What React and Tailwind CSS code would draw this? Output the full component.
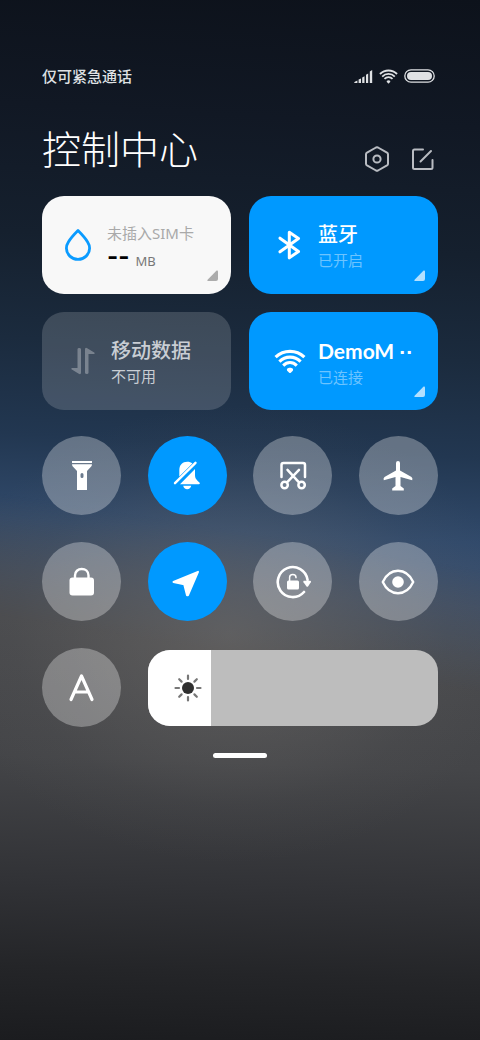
import React, { useState } from 'react';

const DropIcon = () => (
  <svg viewBox="0 0 28 34" className="w-7 h-[34px]" fill="none" stroke="#0a9bff" strokeWidth="2.8" strokeLinejoin="round" aria-hidden="true">
    <path d="M14 2.6C13 3.6 6.6 10.5 4.4 14C3 16.2 2.4 18 2.4 20.2C2.4 26.4 7.6 31.4 14 31.4S25.6 26.4 25.6 20.2C25.6 18 25 16.2 23.6 14C21.4 10.5 15 3.6 14 2.6Z" />
  </svg>
);

const BluetoothIcon = () => (
  <svg viewBox="0 0 24 30" className="w-6 h-[30px]" fill="none" stroke="currentColor" strokeWidth="3" strokeLinecap="round" strokeLinejoin="round" aria-hidden="true">
    <path d="M3 8.2L21.5 21.5L12.3 27.8V2.2L21.5 8.5L3 21.8" />
  </svg>
);

const DataIcon = () => (
  <svg viewBox="0 0 26 28" className="w-[26px] h-7" fill="currentColor" aria-hidden="true">
    <path d="M7.5 2.2Q7.5 1 9.2 1T11 2.2V25.5Q11 28 8.8 26.8L1.4 22.2Q1 21 2.2 21H7.5Z" />
    <path d="M18.5 25.8Q18.5 27 16.8 27T15 25.8V2.5Q15 0 17.2 1.2L24.6 5.8Q25 7 23.8 7H18.5Z" />
  </svg>
);

const WifiIcon = ({ className }) => (
  <svg viewBox="0 0 32 25" className={className} fill="none" stroke="currentColor" aria-hidden="true">
    <path d="M1.6 8.2C9.8 0.3 22.2 0.3 30.4 8.2" strokeWidth="3.2" />
    <path d="M5.4 12.6C11.4 6.6 20.6 6.6 26.6 12.6" strokeWidth="3.1" />
    <path d="M9.2 16.6C13.1 12.6 18.9 12.6 22.8 16.6" strokeWidth="3" />
    <path d="M16.8 23.8Q16 24.4 15.2 23.8L13.2 21.8C12.2 20 13.8 18.8 16 18.8S19.8 20 18.8 21.8Z" fill="currentColor" stroke="none" />
  </svg>
);

const SignalIcon = () => (
  <svg viewBox="0 0 19 13" className="w-[19px] h-[13px]" fill="currentColor" aria-hidden="true">
    <path d="M0 13Q0 11.5 3.4 10.5V13ZM4.6 9.6L7 8.5V13H4.6ZM8.2 7.5L10.5 6.3V13H8.2ZM12 4.8L14.2 3.5V13H12ZM15.8 1.5L18.2 0V13H15.8Z" />
  </svg>
);

const BatteryIcon = () => (
  <svg viewBox="0 0 31 14" className="w-[31px] h-[14px]" aria-hidden="true">
    <rect x="0.8" y="0.8" width="29.4" height="12.4" rx="6.2" fill="none" stroke="currentColor" strokeWidth="1.3" />
    <rect x="3" y="3" width="25" height="8" rx="4" fill="currentColor" />
  </svg>
);

const SettingsIcon = () => (
  <svg viewBox="0 0 26 28" className="w-[26px] h-7" fill="none" stroke="currentColor" strokeWidth="2" strokeLinejoin="round" aria-hidden="true">
    <path d="M12 2.5Q13 2 14 2.5L23 7.6Q24 8.2 24 9.2V18.8Q24 19.8 23 20.4L14 25.5Q13 26 12 25.5L3 20.4Q2 19.8 2 18.8V9.2Q2 8.2 3 7.6Z" />
    <circle cx="13" cy="14" r="3.6" />
  </svg>
);

const EditIcon = () => (
  <svg viewBox="0 0 24 24" className="size-6" fill="none" stroke="currentColor" strokeWidth="2" strokeLinecap="round" strokeLinejoin="round" aria-hidden="true">
    <path d="M12 2.5H3.5Q2 2.5 2 4V20.5Q2 22 3.5 22H20Q21.5 22 21.5 20.5V13" />
    <path d="M9.5 14.5L20 4" />
  </svg>
);

const FlashlightIcon = () => (
  <svg viewBox="0 0 32 32" className="size-8" fill="currentColor" aria-hidden="true">
    <path d="M6 1H26V3H6Z" />
    <path fillRule="evenodd" d="M6 4.2H26Q26 6 24.5 7.2L21 11V30H11V11L7.5 7.2Q6 6 6 4.2ZM16 13Q14.5 13 14.5 14.5V16.5Q14.5 18 16 18T17.5 16.5V14.5Q17.5 13 16 13Z" />
  </svg>
);

const MuteIcon = () => (
  <svg viewBox="0 0 32 32" className="size-8" fill="currentColor" aria-hidden="true">
    <path d="M8.3 16.5V10C8.3 5 11.5 1.8 16.3 1.8C18.3 1.8 20.1 2.4 21.4 3.4Z" />
    <path d="M24 9V15C24 18 25 19.5 28.5 22.5Q29.5 24.2 28 24.2H9Z" />
    <path d="M4 23.2L24.5 2.8" fill="none" stroke="currentColor" strokeWidth="2.4" strokeLinecap="round" />
    <path d="M12.2 25.8H20.2Q19.4 29.2 16.2 29.2T12.2 25.8Z" />
  </svg>
);

const ScreenshotIcon = () => (
  <svg viewBox="0 0 32 32" className="size-8" fill="none" stroke="currentColor" strokeWidth="2.5" strokeLinecap="round" aria-hidden="true">
    <path d="M4.5 17V5Q4.5 3 6.5 3H26Q28 3 28 5V17" />
    <path d="M10.5 9.8L21.5 21.8M22 9.8L10.5 21.8" />
    <circle cx="7.6" cy="25" r="3.2" />
    <circle cx="24.6" cy="25" r="3.2" />
  </svg>
);

const PlaneIcon = () => (
  <svg viewBox="0 0 32 32" className="size-8" fill="currentColor" aria-hidden="true">
    <path d="M14 3Q14 1 16 1T18 3V10.5L29.5 17Q31 18.2 30.2 20.2L18.5 17V26L21.8 28.5V30.5H10.2V28.5L13.5 26V17L1.8 20.2Q1 18.2 2.5 17L14 10.5Z" />
  </svg>
);

const LockIcon = () => (
  <svg viewBox="0 0 32 32" className="size-8" aria-hidden="true">
    <rect x="3.5" y="11.5" width="24.5" height="18" rx="3" fill="currentColor" />
    <path d="M9 13V9.5C9 5.5 12 3 15.7 3S22.5 5.5 22.5 9.5V13" fill="none" stroke="currentColor" strokeWidth="2.4" />
  </svg>
);

const LocationIcon = () => (
  <svg viewBox="0 0 32 32" className="size-8" fill="currentColor" stroke="currentColor" strokeWidth="2" strokeLinejoin="round" aria-hidden="true">
    <path d="M2.5 16L27 5.8L17 29.2H16L13.2 18.3Z" />
  </svg>
);

const RotateLockIcon = () => (
  <svg viewBox="0 0 36 36" className="size-9" aria-hidden="true">
    <path d="M29 28A15 15 0 1 1 32.6 16" fill="none" stroke="currentColor" strokeWidth="2.6" strokeLinecap="round" />
    <path d="M28.8 16.8H35.2Q36.4 17 35.8 18.2L33.2 22.2Q32.3 23.4 31.3 22.2L28.5 18.2Q28 17 28.8 16.8Z" fill="currentColor" />
    <rect x="12" y="16.5" width="12" height="9" rx="1.5" fill="currentColor" />
    <path d="M14.6 17V13.5Q14.6 10.6 17.8 10.6T21 13.5V14.2" fill="none" stroke="currentColor" strokeWidth="1.5" />
  </svg>
);

const EyeIcon = () => (
  <svg viewBox="0 0 34 28" className="w-[34px] h-7" aria-hidden="true">
    <path d="M1.8 14C5.5 6 11 2.8 17 2.8S28.5 6 32.2 14C28.5 22 23 25.2 17 25.2S5.5 22 1.8 14Z" fill="none" stroke="currentColor" strokeWidth="2.4" strokeLinejoin="round" />
    <circle cx="17" cy="14" r="5.8" fill="currentColor" />
  </svg>
);

// Monoline glyph used for the automatic brightness toggle
const AutoIcon = () => (
  <svg viewBox="0 0 28 30" className="w-7 h-[30px]" fill="none" stroke="currentColor" strokeWidth="3.2" strokeLinecap="round" strokeLinejoin="round" aria-hidden="true">
    <path d="M3 26.5L13.5 3L24 26.5M7 19H20" />
  </svg>
);

const SunIcon = () => (
  <svg viewBox="0 0 28 28" className="size-7" aria-hidden="true">
    <circle cx="14" cy="14" r="6" fill="#303030" />
    <path d="M14 1.5V5M14 23V26.5M1.5 14H5M23 14H26.5M5.2 5.2L7.6 7.6M20.4 20.4L22.8 22.8M5.2 22.8L7.6 20.4M20.4 7.6L22.8 5.2" stroke="#777777" strokeWidth="2.2" strokeLinecap="round" />
  </svg>
);

const Corner = ({ className }) => (
  <svg viewBox="0 0 11 11" className={`absolute right-[13px] bottom-[13px] size-[11px] ${className}`} fill="currentColor" aria-hidden="true">
    <path d="M9.6 0.5Q11 0 11 1.5V9Q11 11 9 11H1.2Q-0.4 11 0.6 9.8Z" />
  </svg>
);

const Card = ({ icon, iconClass, cardClass, corner, children }) => (
  <button type="button" className={`relative flex h-[98px] items-center rounded-[22px] text-left ${cardClass}`}>
    <span className={`flex shrink-0 justify-center ${iconClass}`}>{icon}</span>
    <span className="flex min-w-0 flex-col pt-1">{children}</span>
    {corner && <Corner className={corner} />}
  </button>
);

const toggles = [
  { id: 'flashlight', label: '手电筒', Icon: FlashlightIcon },
  { id: 'mute', label: '静音', Icon: MuteIcon },
  { id: 'screenshot', label: '截屏', Icon: ScreenshotIcon },
  { id: 'airplane', label: '飞行模式', Icon: PlaneIcon },
  { id: 'lock', label: '锁屏', Icon: LockIcon },
  { id: 'location', label: '位置信息', Icon: LocationIcon },
  { id: 'rotate', label: '方向锁定', Icon: RotateLockIcon },
  { id: 'eye', label: '护眼模式', Icon: EyeIcon },
  { id: 'auto', label: '自动亮度', Icon: AutoIcon },
];

const App = () => {
  const [active, setActive] = useState({ mute: true, location: true });
  const [brightness, setBrightness] = useState(22);

  const toggle = (id) => setActive((prev) => ({ ...prev, [id]: !prev[id] }));

  return (
    <div className="relative isolate min-h-screen overflow-hidden bg-[linear-gradient(183deg,#0d121b_0%,#111824_12%,#15202e_24%,#1b2b3e_34%,#223751_43%,#314a6b_51%,#3f526e_57%,#44546b_62%)] px-[42px] pt-[66px] font-['Noto_Sans','Noto_Sans_CJK_SC',sans-serif] text-white">
      {/* Grey lower half of the wallpaper, with a soft glow around the middle */}
      <div className="absolute inset-0 -z-10 bg-[linear-gradient(182deg,#4a4b4e_0%,#4a4b4e_60%,#444548_73%,#313236_85%,#242528_93%,#1b1c1f_100%)] [mask-image:linear-gradient(189deg,transparent_51%,black_62%)]" />
      <div className="absolute inset-0 -z-10 bg-[radial-gradient(ellipse_60%_22%_at_48%_61%,rgba(122,118,114,0.45)_0%,rgba(116,113,110,0.28)_40%,rgba(108,106,104,0.08)_75%,transparent_100%)]" />

      <header>
        <div className="flex h-5 items-center justify-between text-[#dfe1e4]">
          <span className="text-[15px] leading-5 font-medium">仅可紧急通话</span>
          <div className="mr-[3px] flex items-center gap-1.5">
            <SignalIcon />
            <WifiIcon className="w-[19px] h-[15px]" />
            <BatteryIcon />
          </div>
        </div>
        <div className="mt-[37px] flex h-[52px] items-center justify-between">
          <h1 className="text-[39px] leading-[52px] font-light">控制中心</h1>
          <div className="mt-5 mr-[3px] flex items-center gap-[21px] text-[#b9bcc2]">
            <button type="button" aria-label="设置"><SettingsIcon /></button>
            <button type="button" aria-label="编辑"><EditIcon /></button>
          </div>
        </div>
      </header>

      <main>
        <div className="mt-[21px] grid grid-cols-2 gap-[18px]">
          <Card icon={<DropIcon />} iconClass="ml-[22px] w-7 mr-[15px]" cardClass="bg-[#f8f8f8]" corner="text-[#acacac]">
            <span className="text-[15px] leading-5 text-[#a9a9a9]">未插入SIM卡</span>
            <span className="flex h-7 items-start gap-1.5 pt-1 text-black">
              <span className="font-['Inter',sans-serif] text-2xl leading-5 font-bold">--</span>
              <span className="pt-1 text-[13px] leading-5 text-[#777777]">MB</span>
            </span>
          </Card>
          <Card icon={<BluetoothIcon />} iconClass="ml-[24px] w-8 mr-[13px]" cardClass="bg-[#0099ff]" corner="text-[#b3e0ff]">
            <span className="text-xl leading-[26px] font-medium">蓝牙</span>
            <span className="text-[15px] leading-6 text-[#6cc4ff]">已开启</span>
          </Card>
          <Card icon={<DataIcon />} iconClass="ml-[28px] w-[26px] mr-[15px] text-white/30" cardClass="bg-white/16">
            <span className="text-xl leading-[26px] font-medium text-[#c9ced4]">移动数据</span>
            <span className="text-[15px] leading-6 text-[#c9ced4]">不可用</span>
          </Card>
          <Card icon={<WifiIcon className="w-8 h-[25px]" />} iconClass="ml-[25px] w-8 mr-[12px]" cardClass="bg-[#0099ff]" corner="text-[#b3e0ff]">
            <span className="font-['Lato',sans-serif] text-[21px] leading-[26px] font-bold whitespace-nowrap">
              DemoM <span className="font-['Liberation_Sans',sans-serif]">··</span>
            </span>
            <span className="text-[15px] leading-6 text-[#6cc4ff]">已连接</span>
          </Card>
        </div>

        <div className="mt-[26px] grid grid-cols-4 gap-x-[26px] gap-y-[27px]">
          {toggles.map(({ id, label, Icon }) => (
            <button
              key={id}
              type="button"
              aria-label={label}
              aria-pressed={!!active[id]}
              onClick={() => toggle(id)}
              className={`flex size-[79px] items-center justify-center rounded-full ${
                active[id] ? 'bg-[#0099ff]' : 'bg-white/30'
              }`}
            >
              <Icon />
            </button>
          ))}

          {/* Brightness slider */}
          <label className="relative col-span-3 flex h-[76px] items-center self-center overflow-hidden rounded-[22px] bg-[#bdbdbd]">
            <span className="absolute inset-y-0 left-0 bg-white" style={{ width: `${brightness}%` }} />
            <span className="relative ml-[26px]"><SunIcon /></span>
            <input
              type="range"
              min="0"
              max="100"
              value={brightness}
              onChange={(e) => setBrightness(Number(e.target.value))}
              aria-label="亮度"
              className="absolute inset-0 h-full w-full cursor-pointer opacity-0"
            />
          </label>
        </div>

        <div className="mx-auto mt-[26px] h-[5px] w-[54px] rounded-full bg-white" />
      </main>
    </div>
  );
};

export default App;
